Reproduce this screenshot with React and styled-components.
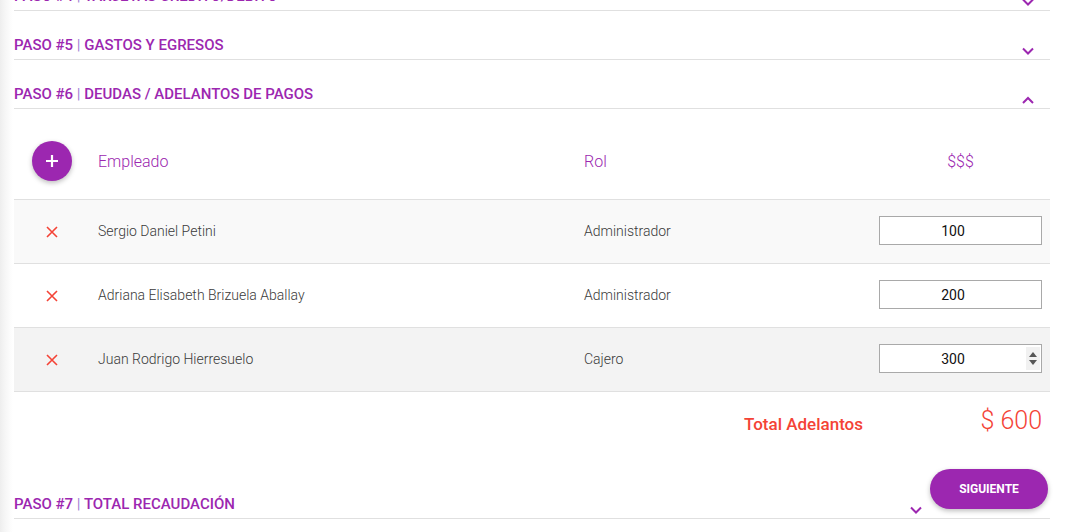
import React from "react";
import styled, { createGlobalStyle } from "styled-components";

const Global = createGlobalStyle`
  html, body { margin: 0; padding: 0; background: #fff; }
  body { font-family: Roboto, "Noto Sans", sans-serif; overflow: hidden; }
  * { box-sizing: border-box; }
`;

const PURPLE = "#9c27b0";
const RED = "#f44336";

const Page = styled.div`
  width: 1070px;
  height: 532px;
  overflow: hidden;
  position: relative;
  background: linear-gradient(to right, #eeeeee 0, #f6f6f6 5px, #fcfcfc 10px, #fff 13px);
`;

const Scroller = styled.div`
  margin: -38px 20px 0 14px;
`;

const StepHeader = styled.div`
  height: 49px;
  display: flex;
  align-items: flex-end;
  padding-bottom: 5px;
  border-bottom: 1px solid #e0e0e0;
`;

const StepTitle = styled.div`
  flex: 1;
  font-size: 15px;
  line-height: 17px;
  font-weight: 500;
  color: ${PURPLE};
  text-transform: uppercase;
  white-space: nowrap;
`;

const Sep = styled.span`
  color: #a47fd6;
  font-weight: 400;
`;

const Chevron = styled.svg`
  width: 12px;
  height: 8px;
  margin-bottom: -1px;
  margin-right: ${(p) => p.$right || 16}px;
  flex: none;
`;

const Body = styled.div``;

const Row = styled.div`
  display: grid;
  grid-template-columns: 76px 486px 295px 179px;
  align-items: center;
  height: ${(p) => p.$h || 64}px;
  padding-top: ${(p) => p.$pt || 0}px;
  background: ${(p) => p.$bg || "transparent"};
  border-bottom: 1px solid #e0e0e0;
`;

const Cell = styled.div`
  padding: 0 8px;
  display: flex;
  align-items: center;
  justify-content: ${(p) => p.$justify || "flex-start"};
  position: relative;
`;

const HeadLabel = styled.div`
  font-size: 16px;
  font-weight: 300;
  color: ${PURPLE};
`;

const Fab = styled.button`
  width: 40px;
  height: 40px;
  border-radius: 50%;
  border: none;
  background: ${PURPLE};
  box-shadow: 0 2px 5px rgba(0, 0, 0, 0.26);
  display: flex;
  align-items: center;
  justify-content: center;
  padding: 0;
`;

const Name = styled.div`
  font-size: 14px;
  color: #3a3a3a;
  font-weight: 300;
  margin-top: -2px;
`;

const Amount = styled.input`
  width: 163px;
  height: 29px;
  border: 1px solid #a9a9a9;
  background: #fff;
  text-align: center;
  font-family: Roboto, sans-serif;
  font-size: 14px;
  color: #111;
  padding: 0 15px 0 0;
  outline: none;
`;

const InputWrap = styled.div`
  position: relative;
  display: flex;
  margin-top: -2px;
`;

const Spinner = styled.div`
  position: absolute;
  right: 2px;
  top: 3px;
  bottom: 3px;
  width: 14px;
  background: #f1f1f1;
  display: flex;
  flex-direction: column;
  align-items: center;
  justify-content: center;
  gap: 3px;
`;

const TotalRow = styled.div`
  display: grid;
  grid-template-columns: 76px 486px 295px 179px;
  height: 78px;
  align-items: start;
  padding-top: 15px;
`;

const TotalLabel = styled.div`
  font-size: 17px;
  font-weight: 500;
  color: ${RED};
  margin-top: 7px;
`;

const TotalValue = styled.div`
  font-size: 25px;
  font-weight: 300;
  color: ${RED};
  line-height: 28px;
`;

const NextButton = styled.button`
  position: absolute;
  left: 930px;
  top: 469px;
  width: 118px;
  height: 40px;
  border-radius: 20px;
  border: none;
  background: ${PURPLE};
  color: #fff;
  font-family: Roboto, sans-serif;
  font-size: 12px;
  font-weight: 700;
  box-shadow: 0 2px 5px rgba(0, 0, 0, 0.26);
  text-transform: uppercase;
`;

function ChevronIcon({ up, right }) {
  return (
    <Chevron $right={right} viewBox="0 0 12 8">
      <polyline
        points={up ? "1,7 6,2 11,7" : "1,1.5 6,6.5 11,1.5"}
        fill="none"
        stroke={PURPLE}
        strokeWidth="2"
      />
    </Chevron>
  );
}

function Step({ num, title, up, right }) {
  return (
    <StepHeader>
      <StepTitle>
        PASO #{num} <Sep>|</Sep> {title}
      </StepTitle>
      <ChevronIcon up={up} right={right} />
    </StepHeader>
  );
}

const CloseIcon = () => (
  <svg width="12" height="12" viewBox="0 0 12 12">
    <path d="M1 1 L11 11 M11 1 L1 11" stroke={RED} strokeWidth="1.6" fill="none" />
  </svg>
);

const rows = [
  { name: "Sergio Daniel Petini", rol: "Administrador", amount: "100", bg: "#f9f9f9" },
  { name: "Adriana Elisabeth Brizuela Aballay", rol: "Administrador", amount: "200", bg: "#ffffff" },
  { name: "Juan Rodrigo Hierresuelo", rol: "Cajero", amount: "300", bg: "#f3f3f3", spinner: true },
];

export default function App() {
  return (
    <Page>
      <Global />
      <Scroller>
        <Step num={4} title="Tarjetas crédito/débito" />
        <Step num={5} title="Gastos y egresos" />
        <Step num={6} title="Deudas / adelantos de pagos" up />
        <Body>
          <Row $h={91} $pt={14}>
            <Cell $justify="center">
              <Fab aria-label="agregar">
                <svg width="14" height="14" viewBox="0 0 14 14">
                  <path d="M7 1 V13 M1 7 H13" stroke="#fff" strokeWidth="2.2" />
                </svg>
              </Fab>
            </Cell>
            <Cell>
              <HeadLabel>Empleado</HeadLabel>
            </Cell>
            <Cell>
              <HeadLabel>Rol</HeadLabel>
            </Cell>
            <Cell $justify="center">
              <HeadLabel>$$$</HeadLabel>
            </Cell>
          </Row>
          {rows.map((r) => (
            <Row key={r.name} $bg={r.bg}>
              <Cell $justify="center">
                <CloseIcon />
              </Cell>
              <Cell>
                <Name>{r.name}</Name>
              </Cell>
              <Cell>
                <Name>{r.rol}</Name>
              </Cell>
              <Cell>
                <InputWrap>
                  <Amount defaultValue={r.amount} readOnly />
                  {r.spinner && (
                    <Spinner>
                      <svg width="8" height="5" viewBox="0 0 8 5">
                        <path d="M0 5 L4 0 L8 5 Z" fill="#555" />
                      </svg>
                      <svg width="8" height="5" viewBox="0 0 8 5">
                        <path d="M0 0 L4 5 L8 0 Z" fill="#555" />
                      </svg>
                    </Spinner>
                  )}
                </InputWrap>
              </Cell>
            </Row>
          ))}
          <TotalRow>
            <Cell />
            <Cell />
            <Cell $justify="flex-end">
              <TotalLabel>Total Adelantos</TotalLabel>
            </Cell>
            <Cell $justify="flex-end">
              <TotalValue>$ 600</TotalValue>
            </Cell>
          </TotalRow>
        </Body>
        <Step num={7} title="Total recaudación" right={128} />
      </Scroller>
      <NextButton>Siguiente</NextButton>
    </Page>
  );
}
